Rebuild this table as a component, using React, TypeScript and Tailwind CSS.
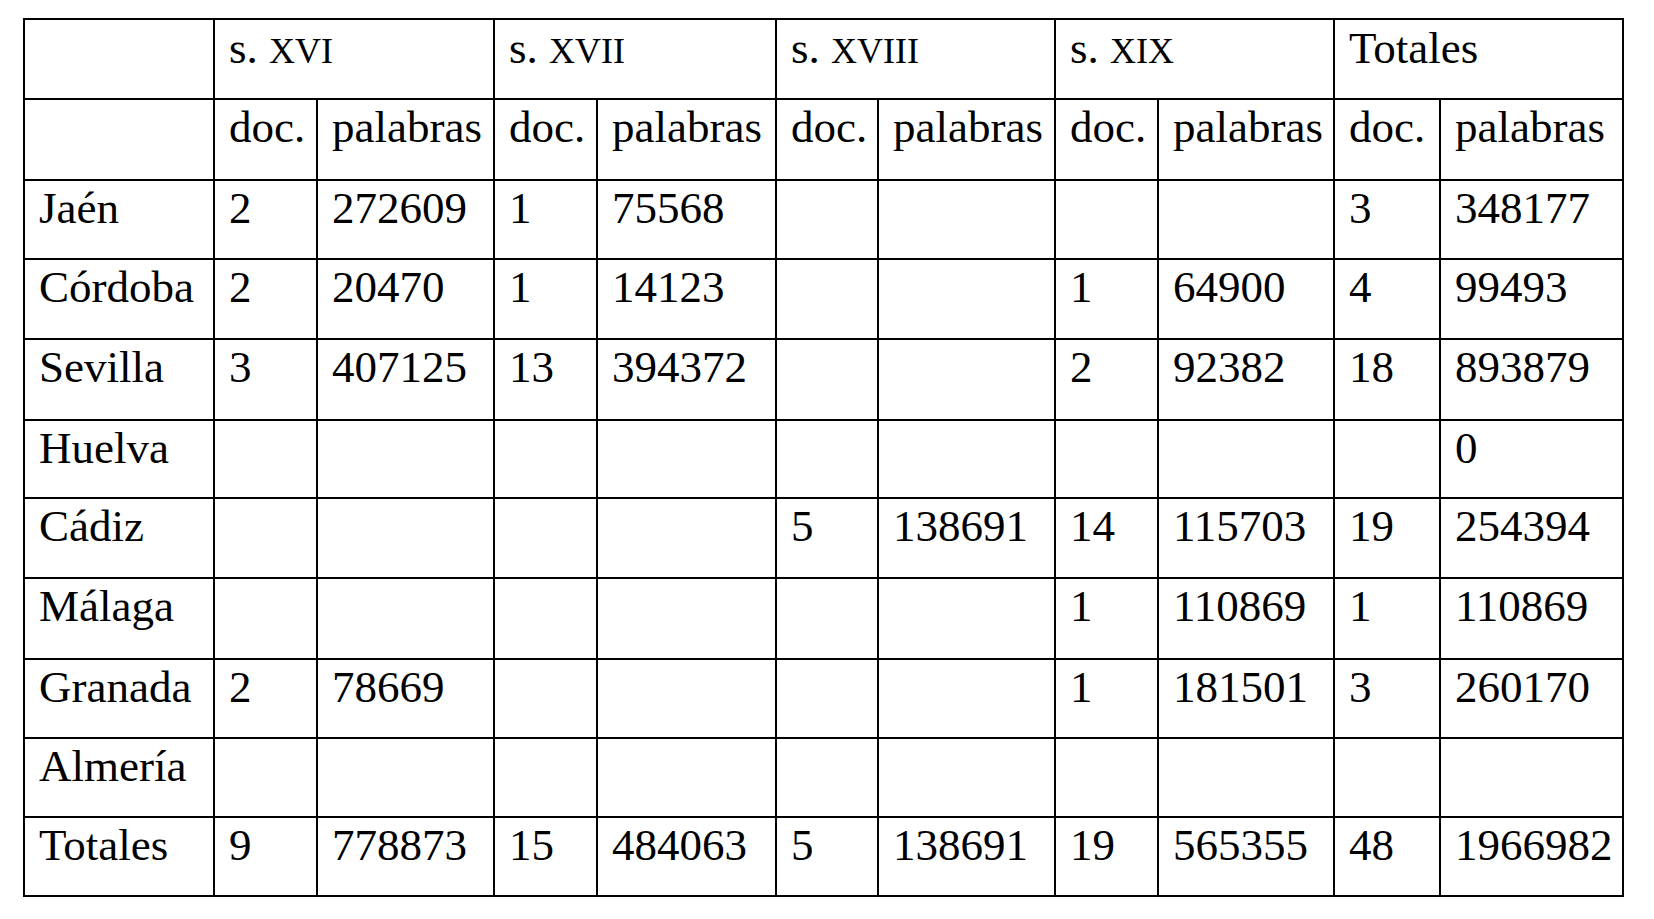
import React from "react";

const rows: string[][] = [
  ["Jaén", "2", "272609", "1", "75568", "", "", "", "", "3", "348177"],
  ["Córdoba", "2", "20470", "1", "14123", "", "", "1", "64900", "4", "99493"],
  ["Sevilla", "3", "407125", "13", "394372", "", "", "2", "92382", "18", "893879"],
  ["Huelva", "", "", "", "", "", "", "", "", "", "0"],
  ["Cádiz", "", "", "", "", "5", "138691", "14", "115703", "19", "254394"],
  ["Málaga", "", "", "", "", "", "", "1", "110869", "1", "110869"],
  ["Granada", "2", "78669", "", "", "", "", "1", "181501", "3", "260170"],
  ["Almería", "", "", "", "", "", "", "", "", "", ""],
  ["Totales", "9", "778873", "15", "484063", "5", "138691", "19", "565355", "48", "1966982"],
];

const centuries = ["XVI", "XVII", "XVIII", "XIX"];
const groups = ["s. XVI", "s. XVII", "s. XVIII", "s. XIX", "Totales"];

export default function App() {
  return (
    <div className="min-h-screen w-full bg-white">
      <div className="pt-[18px] pl-[23px]">
        <div
          className="grid w-fit gap-[2px] bg-black p-[2px] text-black text-[45px] leading-[50px] whitespace-nowrap grid-cols-[188px_101px_175px_101px_177px_100px_175px_101px_174px_104px_181px] grid-rows-[78px_79px_77px_78px_79px_76px_78px_79px_77px_77px_77px]"
          style={{ fontFamily: '"Liberation Serif", "Times New Roman", serif' }}
        >
          <div className="bg-white pl-[14px] pt-[3px]"></div>
          {centuries.map((c) => (
            <div key={c} className="col-span-2 bg-white pl-[14px] pt-[3px]">
              s. <span className="text-[36px]">{c}</span>
            </div>
          ))}
          <div className="col-span-2 bg-white pl-[14px] pt-[3px]">Totales</div>
          <div className="bg-white pl-[14px] pt-[2px]"></div>
          {groups.map((g) => (
            <React.Fragment key={"h2" + g}>
              <div className="bg-white pl-[14px] pt-[2px]">doc.</div>
              <div className="bg-white pl-[14px] pt-[2px]">palabras</div>
            </React.Fragment>
          ))}
          {rows.map((r, i) =>
            r.map((c, j) => (
              <div key={i + "-" + j} className="bg-white pl-[14px] pt-[2px]">
                {c}
              </div>
            ))
          )}
        </div>
      </div>
    </div>
  );
}
